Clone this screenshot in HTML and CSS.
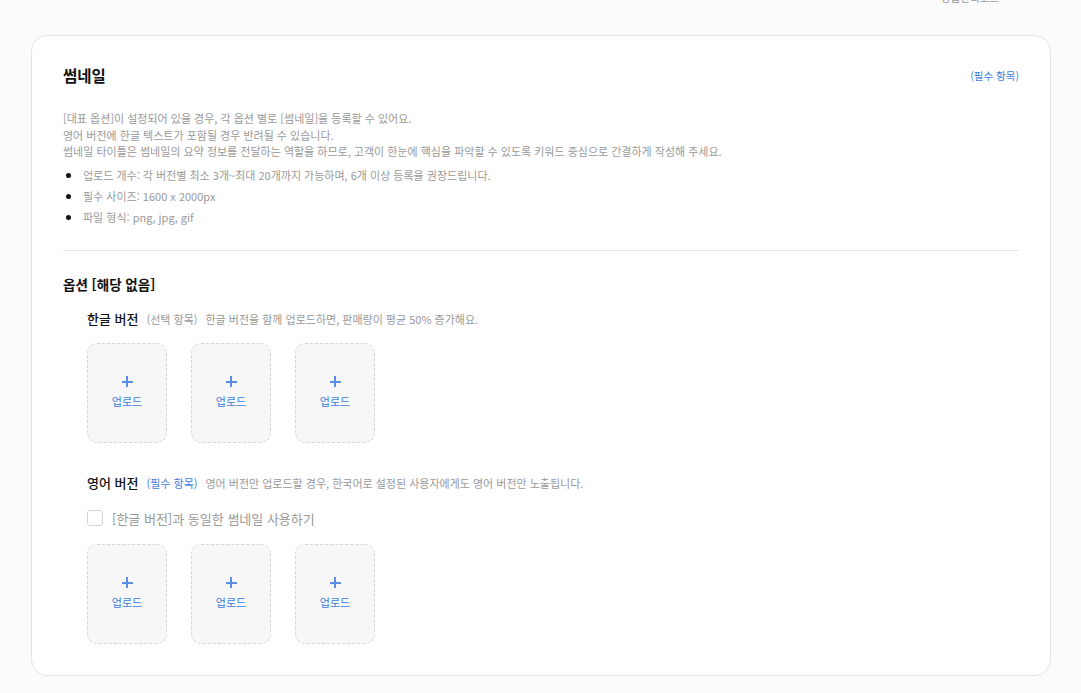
FILE: index.html
```html
<!DOCTYPE html>
<html lang="ko">
<head>
    <meta charset="UTF-8">
    <meta name="viewport" content="width=device-width, initial-scale=1.0">
    <title>썸네일 등록</title>
    <link rel="stylesheet" href="styles.css">
</head>
<body>

    <div class="top-bar">
        <span class="product-code">상품관리코드</span>
    </div>

    <div class="card">
        <div class="card-head">
            <h2>썸네일</h2>
            <span class="required">(필수 항목)</span>
        </div>

        <div class="guide">
            <p>[대표 옵션]이 설정되어 있을 경우, 각 옵션 별로 [썸네일]을 등록할 수 있어요.</p>
            <p>영어 버전에 한글 텍스트가 포함될 경우 반려될 수 있습니다.</p>
            <p>썸네일 타이틀은 썸네일의 요약 정보를 전달하는 역할을 하므로, 고객이 한눈에 핵심을 파악할 수 있도록 키워드 중심으로 간결하게 작성해 주세요.</p>
            <ul>
                <li>업로드 개수: 각 버전별 최소 3개~최대 20개까지 가능하며, 6개 이상 등록을 권장드립니다.</li>
                <li>필수 사이즈: 1600 x 2000px</li>
                <li>파일 형식: png, jpg, gif</li>
            </ul>
        </div>

        <hr class="divider">

        <h3 class="option-title">옵션 [해당 없음]</h3>

        <div class="version">
            <div class="version-head">
                <strong>한글 버전</strong>
                <span class="tag">(선택 항목)</span>
                <span class="desc">한글 버전을 함께 업로드하면, 판매량이 평균 50% 증가해요.</span>
            </div>
            <div class="uploads">
                <button class="upload"><span class="plus"></span>업로드</button>
                <button class="upload"><span class="plus"></span>업로드</button>
                <button class="upload"><span class="plus"></span>업로드</button>
            </div>
        </div>

        <div class="version">
            <div class="version-head">
                <strong>영어 버전</strong>
                <span class="tag tag-blue">(필수 항목)</span>
                <span class="desc">영어 버전만 업로드할 경우, 한국어로 설정된 사용자에게도 영어 버전만 노출됩니다.</span>
            </div>
            <label class="same-check">
                <span class="box"></span>
                [한글 버전]과 동일한 썸네일 사용하기
            </label>
            <div class="uploads">
                <button class="upload"><span class="plus"></span>업로드</button>
                <button class="upload"><span class="plus"></span>업로드</button>
                <button class="upload"><span class="plus"></span>업로드</button>
            </div>
        </div>
    </div>

</body>
</html>
```

FILE: styles.css
```css
* {
    margin: 0;
    padding: 0;
    box-sizing: border-box;
}

body {
    font-family: 'Noto Sans CJK KR', 'Noto Sans', sans-serif;
    background-color: #fbfbfb;
    color: #222;
    padding: 0 30px 0 31px;
}

.top-bar {
    height: 35px;
    display: flex;
    justify-content: flex-end;
    padding-right: 52px;
}

.product-code {
    font-size: 10.5px;
    color: #999;
    margin-top: -10px;
}

.card {
    background-color: white;
    border: 1px solid #e4e4e4;
    border-radius: 16px;
    padding: 28px 31px 32px 31px;
    height: 641px;
}

.card-head {
    display: flex;
    justify-content: space-between;
    align-items: center;
}

.card-head h2 {
    font-size: 15.5px;
    font-weight: 700;
    color: #111;
}

.required {
    font-size: 10.5px;
    color: #3d7fe0;
}

.guide {
    margin-top: 24px;
    font-size: 11px;
    color: #999;
    line-height: 16.5px;
}

.guide ul {
    margin-top: 5px;
    padding-left: 20px;
    list-style: none;
}

.guide li {
    position: relative;
    line-height: 21px;
}

.guide li::before {
    content: '';
    position: absolute;
    left: -17px;
    top: 8px;
    width: 5px;
    height: 5px;
    border-radius: 50%;
    background-color: #111;
}

.divider {
    border: none;
    border-top: 1px solid #e6e6e6;
    margin: 22px 0 23px;
}

.option-title {
    font-size: 13.5px;
    font-weight: 700;
    color: #111;
}

.version {
    padding-left: 24px;
    margin-top: 15px;
}

.version + .version {
    margin-top: 30px;
}

.version-head {
    display: flex;
    align-items: baseline;
    gap: 8px;
}

.version-head strong {
    font-size: 13px;
    font-weight: 500;
    color: #111;
}

.tag {
    font-size: 11px;
    color: #999;
}

.tag-blue {
    color: #3d7fe0;
}

.desc {
    font-size: 11px;
    color: #999;
}

.uploads {
    display: flex;
    gap: 24px;
    margin-top: 15px;
}

.upload {
    width: 80px;
    height: 100px;
    border: 1px dashed #d6d6d6;
    border-radius: 10px;
    background-color: #f7f7f7;
    color: #3d7fe0;
    font-family: inherit;
    font-size: 11px;
    display: flex;
    flex-direction: column;
    align-items: center;
    justify-content: center;
    cursor: pointer;
}

.plus {
    position: relative;
    width: 11px;
    height: 11px;
    margin-bottom: 6px;
}

.plus::before,
.plus::after {
    content: '';
    position: absolute;
    background-color: #5b8fe6;
}

.plus::before {
    left: 0;
    top: 4.5px;
    width: 11px;
    height: 2px;
}

.plus::after {
    left: 4.5px;
    top: 0;
    width: 2px;
    height: 11px;
}

.same-check {
    display: flex;
    align-items: center;
    gap: 9px;
    margin-top: 17px;
    font-size: 13px;
    color: #999;
}

.same-check .box {
    width: 16px;
    height: 16px;
    border: 1px solid #d6d6d6;
    border-radius: 3px;
    background-color: white;
}

.same-check + .uploads {
    margin-top: 16px;
}
```
